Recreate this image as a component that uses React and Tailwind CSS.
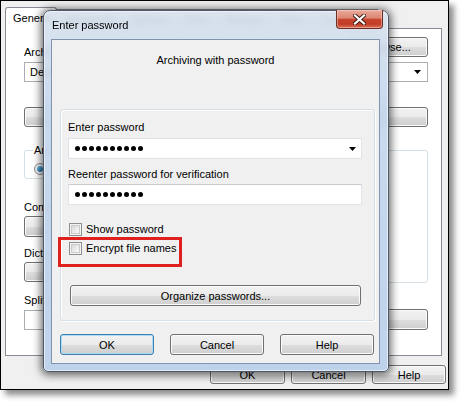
import clsx from "clsx";

const btnBase =
  "flex items-center justify-center rounded-[3px] border bg-[linear-gradient(to_bottom,#f2f2f2_0%,#ebebeb_50%,#dddddd_51%,#cfcfcf_100%)]";

function Btn({ children, className = "", isDefault = false }) {
  return (
    <div
      className={clsx(
        btnBase,
        isDefault
          ? "border-[#3c7fb1] shadow-[inset_0_0_0_1px_#a9dcf6]"
          : "border-[#707070] shadow-[inset_0_0_0_1px_#fbfbfb]",
        className
      )}
    >
      {children}
    </div>
  );
}

function Arrow() {
  return (
    <svg width="7" height="4" viewBox="0 0 7 4" className="shrink-0">
      <path d="M0 0h7L3.5 4z" fill="#000" />
    </svg>
  );
}

function Combo({ text, className = "" }) {
  return (
    <div
      className={clsx(
        "flex items-center justify-between border border-[#abadb3] bg-white pl-[5px] pr-[6px]",
        className
      )}
    >
      <span>{text}</span>
      <Arrow />
    </div>
  );
}

function DropList({ text, className = "" }) {
  return (
    <div
      className={clsx(
        btnBase,
        "justify-between border-[#707070] pl-[4px] pr-[6px] shadow-[inset_0_0_0_1px_#fbfbfb]",
        className
      )}
    >
      <span>{text}</span>
      <Arrow />
    </div>
  );
}

function Check({ label }) {
  return (
    <div className="flex h-[13px] items-center gap-[4px] pl-[1px]">
      <div className="flex h-[13px] w-[13px] items-center justify-center border border-[#8e8f8f] bg-[#f4f4f4]">
        <div className="h-[9px] w-[9px] border border-[#cacaca] bg-[linear-gradient(135deg,#d9d9d9,#fbfbfb)]" />
      </div>
      <span className="leading-[13px]">{label}</span>
    </div>
  );
}

function Dots() {
  return (
    <div className="flex gap-[2px]">
      {Array.from({ length: 10 }).map((_, i) => (
        <div key={i} className="h-[5px] w-[5px] rounded-full bg-black" />
      ))}
    </div>
  );
}

const tabs = ["Advanced", "Options", "Files", "Backup", "Time", "Comment"];

export default function App() {
  return (
    <div className="relative h-[406px] w-[464px] overflow-hidden bg-white font-['Liberation_Sans',Arial,sans-serif] text-[11px] leading-[14px] text-black">
      {/* background dialog */}
      <div className="flex h-[390px] w-[449px] flex-col overflow-hidden border border-black bg-[#f0f0f0] pl-[4px] pt-[6px] shadow-[5px_5px_6px_rgba(0,0,0,0.45)]">
        <div className="flex h-[22px] items-end">
          <div className="relative z-10 h-[22px] w-[52px] rounded-t-[3px] border border-b-0 border-[#898c95] bg-white pl-[7px] pt-[3px]">
            General
          </div>
          {tabs.map((t) => (
            <div
              key={t}
              className="h-[20px] border border-b-0 border-l-0 border-[#898c95] bg-[linear-gradient(to_bottom,#f3f3f3,#e3e3e3)] px-[8px] pt-[2px]"
            >
              {t}
            </div>
          ))}
        </div>
        <div className="-mt-px flex h-[328px] w-[437px] flex-col border border-[#898c95] bg-white pl-[18px] pr-[13px] pt-[8px]">
          <div className="flex h-[20px] items-end justify-between">
            <span className="-mb-[2px]">Archive name</span>
            <Btn className="h-[20px] w-[80px]">Browse...</Btn>
          </div>
          <Combo text="Desktop.rar" className="mt-[5px] h-[20px]" />
          <div className="mt-[25px] flex h-[20px] justify-between">
            <Btn className="h-[20px] w-[120px]">Profiles...</Btn>
            <DropList text="Add and replace files" className="h-[20px] w-[197px]" />
          </div>
          <div className="mt-[16px] flex justify-between">
            <div className="flex w-[190px] flex-col">
              <fieldset className="h-[36px] rounded-[3px] border border-[#d5dfe5] px-[8px]">
                <legend className="px-[1px]">Archive format</legend>
                <div className="mt-[5px] flex items-center gap-[4px] pl-[1px]">
                  <div className="flex h-[12px] w-[12px] items-center justify-center rounded-full border border-[#8e8f8f] bg-[#f4f4f4]">
                    <div className="h-[6px] w-[6px] rounded-full bg-[linear-gradient(135deg,#6fc3f2,#1a5f9c)]" />
                  </div>
                  <span>RAR</span>
                </div>
              </fieldset>
              <span className="mt-[21px]">Compression method</span>
              <DropList text="Normal" className="mt-[2px] h-[21px]" />
              <span className="mt-[9px]">Dictionary size</span>
              <DropList text="4096 KB" className="mt-[2px] h-[20px]" />
              <span className="mt-[11px]">Split to volumes, size</span>
              <div className="mt-[3px] h-[20px] border border-[#abadb3] bg-white" />
            </div>
            <div className="flex w-[197px] flex-col">
              <fieldset className="h-[140px] rounded-[3px] border border-[#d5dfe5] px-[8px]">
                <legend className="px-[1px]">Archiving options</legend>
              </fieldset>
              <Btn className="mt-[26px] h-[21px]">Set password...</Btn>
            </div>
          </div>
        </div>
        <div className="mt-[9px] flex justify-end gap-[6px] pr-[2px]">
          <Btn className="h-[19px] w-[75px]">OK</Btn>
          <Btn className="h-[19px] w-[75px]">Cancel</Btn>
          <Btn className="h-[19px] w-[74px]">Help</Btn>
        </div>
      </div>

      {/* Enter password dialog */}
      <div className="absolute left-[43px] top-[10px] z-20 flex h-[362px] w-[346px] flex-col rounded-t-[7px] rounded-b-[5px] border border-[#4e5a6a] bg-[linear-gradient(to_bottom,rgba(216,226,238,0.9),rgba(198,215,236,0.93)_25%,rgba(188,209,235,0.96))] pb-[7px] pl-[7px] pr-[8px] shadow-[0_1px_9px_2px_rgba(0,0,0,0.6),inset_0_0_0_1px_rgba(255,255,255,0.55)] backdrop-blur-[3px]">
        <div className="flex h-[28px] items-start justify-between">
          <span className="pl-[1px] pt-[7px]">Enter password</span>
          <div className="-mr-[3px] -mt-px flex h-[19px] w-[47px] items-center justify-center rounded-b-[4px] border border-t-0 border-[#6b2c22] bg-[linear-gradient(to_bottom,#eaaa9c_0%,#dc8572_45%,#c8452e_52%,#c23c27_78%,#dc7259_100%)] shadow-[inset_0_0_0_1px_rgba(255,220,210,0.45)]">
            <svg width="13" height="11" viewBox="0 0 13 11">
              <path d="M2 1.5l9 8M11 1.5l-9 8" stroke="#3a1a14" strokeWidth="4" strokeLinecap="square" />
              <path d="M2 1.5l9 8M11 1.5l-9 8" stroke="#fff" strokeWidth="2.2" strokeLinecap="square" />
            </svg>
          </div>
        </div>
        <div className="flex flex-1 flex-col border border-[#8294ad] bg-[#f0f0f0]">
          <div className="pt-[13px] text-center">Archiving with password</div>
          <div className="ml-[8px] mr-[4px] mt-[42px] flex h-[212px] flex-col rounded-[3px] border border-[#d5dfe5] pl-[7px] pr-[12px] pt-[10px] shadow-[inset_1px_1px_0_#fff,1px_1px_0_#fff]">
            <span>Enter password</span>
            <div className="mt-[4px] flex h-[21px] items-center justify-between border border-[#dde2e8] bg-white pl-[6px] pr-[5px]">
              <Dots />
              <Arrow />
            </div>
            <span className="mt-[8px]">Reenter password for verification</span>
            <div className="mt-[3px] flex h-[21px] items-center border border-[#e2e3ea] border-t-[#c9cbd1] bg-white pl-[6px]">
              <Dots />
            </div>
            <div className="mt-[18px]">
              <Check label="Show password" />
            </div>
            <div className="mt-[6px]">
              <Check label="Encrypt file names" />
            </div>
            <Btn className="ml-[2px] mr-[1px] mt-[30px] h-[21px]">Organize passwords...</Btn>
          </div>
          <div className="mt-[13px] flex gap-[16px] pl-[8px]">
            <Btn isDefault className="h-[21px] w-[94px]">OK</Btn>
            <Btn className="h-[21px] w-[94px]">Cancel</Btn>
            <Btn className="h-[21px] w-[94px]">Help</Btn>
          </div>
        </div>
        {/* red highlight */}
        <div className="absolute left-[14px] top-[226px] h-[30px] w-[124px] border-[3px] border-[#e0201e]" />
      </div>
    </div>
  );
}
